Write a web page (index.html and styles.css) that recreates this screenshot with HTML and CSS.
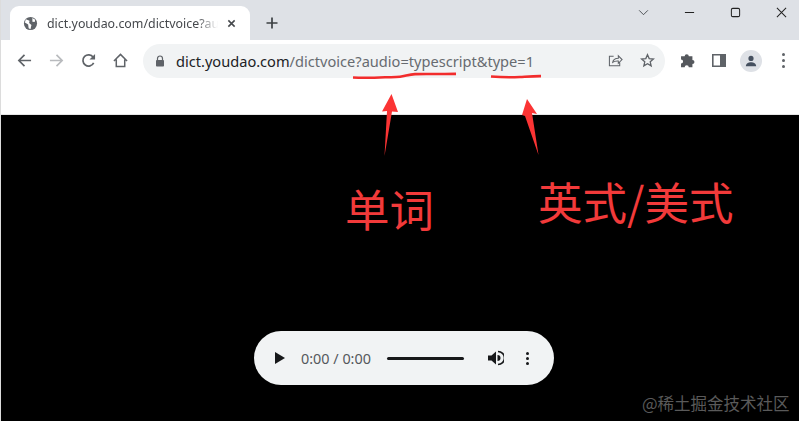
FILE: index.html
```html
<!DOCTYPE html>
<html lang="zh-CN">
  <head>
    <meta charset="UTF-8" />
    <title>dict.youdao.com/dictvoice</title>
    <link rel="stylesheet" href="styles.css">
  </head>
  <body>
    <div class="window">
      <div class="tabstrip">
        <div class="tab">
          <svg class="globe" viewBox="0 0 16 16">
            <circle cx="8" cy="8" r="7" fill="#5f6368" />
            <path d="M3 3.5 7 5l-.5 2.5L9 9.5 8 14l-2-1-.5-4L2 7zM10 2l3 2-.5 2.500L10 6z" fill="#fff" />
          </svg>
          <span class="tab-title">dict.youdao.com/dictvoice?au</span>
          <svg class="tab-close" viewBox="0 0 10 10">
            <path d="M1.5 1.5l7 7M8.5 1.5l-7 7" stroke="#45484c" stroke-width="1.7" fill="none" />
          </svg>
        </div>
        <svg class="new-tab" viewBox="0 0 12 12">
          <path d="M6 .5v11M.5 6h11" stroke="#3c4043" stroke-width="1.7" fill="none" />
        </svg>
        <div class="window-controls">
          <svg class="caret" viewBox="0 0 12 8"><path d="M1 1.5l5 5 5-5" stroke="#3c4043" fill="none" /></svg>
          <svg class="win-btn" viewBox="0 0 12 12"><path d="M1 6h10" stroke="#222" stroke-width="1.1" fill="none" /></svg>
          <svg class="win-btn" viewBox="0 0 12 12"><rect x="1.5" y="1.5" width="9" height="9" rx="1.5" stroke="#222" stroke-width="1.1" fill="none" /></svg>
          <svg class="win-btn" viewBox="0 0 12 12"><path d="M1 1l10 10M11 1L1 11" stroke="#222" stroke-width="1.1" fill="none" /></svg>
        </div>
      </div>

      <div class="toolbar">
        <svg class="tool" viewBox="0 0 16 16"><path d="M15 8H2M8 2 2 8l6 6" stroke="#5f6368" stroke-width="1.8" fill="none" /></svg>
        <svg class="tool" viewBox="0 0 16 16"><path d="M1 8h13M8 2l6 6-6 6" stroke="#b9bbbe" stroke-width="1.8" fill="none" /></svg>
        <svg class="tool" viewBox="0 0 16 16"><path d="M13.5 10.5A6 6 0 1 1 13 4.5" stroke="#5f6368" stroke-width="1.8" fill="none" /><path d="M15 1v6H9z" fill="#5f6368" /></svg>
        <svg class="tool" viewBox="0 0 16 16"><path d="M1 8.5 8 1.500l7 7M3.500 7v7.500h9V7" stroke="#5f6368" stroke-width="1.6" fill="none" /></svg>

        <div class="omnibox">
          <svg class="lock" viewBox="0 0 10 12">
            <path d="M2.5 5V3.5a2.5 2.5 0 0 1 5 0V5" stroke="#5f6368" stroke-width="1.2" fill="none" />
            <rect x="1" y="5" width="8" height="6.5" rx=".8" fill="#5f6368" />
          </svg>
          <span class="url"><span class="host">dict.youdao.com</span>/dictvoice?audio=typescript&amp;type=1</span>
          <svg class="omni-icon" viewBox="0 0 16 16"><path d="M6 3.500H1.500v10h11V10M5 10c.5-3 3-4.500 6-4.500V3l4 4-4 4V8.500C8.500 8.300 6.500 8.800 5 10z" stroke="#5f6368" stroke-width="1.1" fill="none" /></svg>
          <svg class="omni-icon" viewBox="0 0 16 16"><path d="M8 1.800l1.800 4.200 4.500.4-3.400 3 1 4.400L8 11.500l-3.900 2.300 1-4.400-3.400-3 4.500-.4z" stroke="#5f6368" stroke-width="1.400" fill="none" /></svg>
        </div>

        <div class="toolbar-end">
          <svg class="ext" viewBox="0 2 14.500 14"><path d="M1 5h3.500a2 2 0 0 1 4 0H12v3.500a2 2 0 0 1 0 4V15.500H8.500a2 2 0 0 0-4 0H1v-3.500a2 2 0 0 0 0-4z" fill="#55585d" /></svg>
          <svg class="side" viewBox="0 0 14 13"><path d="M.8.800h12.400v11.400H.8z" stroke="#5f6368" stroke-width="1.600" fill="none" /><rect x="8" y="1" width="5" height="11" fill="#5f6368" /></svg>
          <div class="avatar">
            <svg viewBox="0 0 14 14"><circle cx="7" cy="4" r="3" fill="#45505f" /><path d="M1 13c0-3 3-4.500 6-4.500s6 1.500 6 4.500z" fill="#45505f" /></svg>
          </div>
          <div class="kebab"><i></i><i></i><i></i></div>
        </div>
      </div>

      <div class="page-top"></div>

      <div class="viewer">
        <div class="player">
          <svg class="play" viewBox="0 0 10 12"><path d="M0 0l10 6-10 6z" fill="#17181a" /></svg>
          <span class="time">0:00 / 0:00</span>
          <div class="track"></div>
          <svg class="volume" viewBox="0 0 16 16">
            <path d="M0 5.500h3.500L8 1.500v13l-4.500-4H0z" fill="#17181a" />
            <path d="M10 1.500a6.500 6.500 0 0 1 0 13" stroke="#17181a" stroke-width="1.600" fill="none" />
            <path d="M9.500 5a3 3 0 0 1 0 6z" fill="#17181a" />
          </svg>
          <div class="player-menu"><i></i><i></i><i></i></div>
        </div>
      </div>
    </div>

    <svg class="marks" viewBox="0 0 799 421">
      <path d="M353 77.500c12 .6 22 .2 32-.3 6-.1 10 .2 15-.4 5-.5 9-2.500 15-2.700 14-.5 27 .3 41-.2M491 76.500c10 .8 20 .9 29 .5 7-.4 14-1 21-.9" stroke="#f22c2c" stroke-width="2.600" fill="none" />
      <path d="M391.500 94 398 112l-6-.5L384.500 156 387 111l-5 .5zM527 99l10 15-5-1 6.500 42L525 116l-3-1z" fill="#fb3434" />
    </svg>
    <span class="label label-word">单词</span>
    <span class="label label-type">英式/美式</span>
    <span class="watermark">@稀土掘金技术社区</span>
  </body>
</html>
```

FILE: styles.css
```css
* {
  box-sizing: border-box;
}
body {
  margin: 0;
  width: 799px;
  height: 421px;
  overflow: hidden;
  position: relative;
  background: white;
  font-family: "Noto Sans", sans-serif;
}
svg {
  display: block;
  flex: none;
}
.window {
  height: 421px;
  display: flex;
  flex-direction: column;
  border-left: 1px solid #dcdcdc;
}

.tabstrip {
  height: 40px;
  background: #dee1e6;
  display: flex;
  align-items: flex-end;
  padding-left: 9px;
}
.tab {
  width: 240px;
  height: 34px;
  background: white;
  border-radius: 9px 9px 0 0;
  display: flex;
  align-items: center;
  padding: 0 13px;
}
.globe {
  width: 15px;
  height: 15px;
}
.tab-title {
  width: 171px;
  margin-left: 9px;
  font-size: 12.4px;
  color: #45484c;
  white-space: nowrap;
  -webkit-mask-image: linear-gradient(to right, black 150px, transparent 171px);
  mask-image: linear-gradient(to right, black 150px, transparent 171px);
}
.tab-close {
  width: 9px;
  height: 9px;
  margin-left: 9px;
}
.new-tab {
  width: 12px;
  height: 12px;
  margin: 0 0 11px 16px;
}
.window-controls {
  margin-left: auto;
  align-self: flex-start;
  display: flex;
  align-items: center;
  gap: 35px;
  padding: 7px 12px 0 0;
}
.caret {
  width: 11px;
  height: 7px;
}
.win-btn {
  width: 11px;
  height: 11px;
}

.toolbar {
  height: 41px;
  display: flex;
  align-items: center;
  padding-left: 16px;
  flex: none;
}
.tool {
  width: 15px;
  height: 15px;
  margin-right: 17px;
}
.omnibox {
  width: 522px;
  height: 34px;
  margin-left: -2px;
  border-radius: 17px;
  background: #f1f3f4;
  display: flex;
  align-items: center;
  padding-left: 12px;
}
.lock {
  width: 10px;
  height: 12px;
}
.url {
  margin-left: 11px;
  font-size: 14.6px;
  color: #676b70;
  white-space: nowrap;
}
.host {
  color: #202124;
}
.omni-icon {
  width: 15px;
  height: 15px;
}
.url + .omni-icon {
  margin-left: auto;
  margin-right: 17px;
}
.omni-icon + .omni-icon {
  margin-right: 10px;
}
.toolbar-end {
  display: flex;
  align-items: center;
  padding-left: 15px;
}
.ext {
  width: 15px;
  height: 15px;
}
.side {
  width: 14px;
  height: 13px;
  margin-left: 17px;
}
.avatar {
  width: 22px;
  height: 22px;
  margin-left: 14px;
  border-radius: 50%;
  background: #dee1e6;
  display: flex;
  align-items: center;
  justify-content: center;
}
.avatar svg {
  width: 12px;
  height: 12px;
}
.kebab,
.player-menu {
  display: flex;
  flex-direction: column;
}
.kebab {
  gap: 3px;
  margin-left: 20px;
}
.kebab i {
  width: 3px;
  height: 3px;
  border-radius: 50%;
  background: #5f6368;
}

.page-top {
  height: 34px;
  flex: none;
  border-bottom: 1px solid #e6e6e6;
}
.viewer {
  flex: 1;
  background: black;
  display: flex;
  justify-content: center;
  align-items: flex-end;
  padding: 0 0 36px 8px;
}
.player {
  width: 300px;
  height: 54px;
  border-radius: 27px;
  background: #f1f3f4;
  display: flex;
  align-items: center;
  padding-left: 21px;
}
.play {
  width: 10px;
  height: 12px;
}
.time {
  margin-left: 16px;
  font-size: 14.4px;
  color: #55585c;
  white-space: nowrap;
}
.track {
  width: 77px;
  height: 3px;
  margin-left: 16px;
  border-radius: 2px;
  background: #17181a;
}
.volume {
  width: 16px;
  height: 16px;
  margin-left: 24px;
}
.player-menu {
  gap: 2px;
  margin-left: 22px;
}
.player-menu i {
  width: 3px;
  height: 3px;
  border-radius: 50%;
  background: #17181a;
}

.marks {
  position: absolute;
  left: 0;
  top: 0;
  width: 799px;
  height: 421px;
}
.label {
  position: absolute;
  font-family: "Noto Sans CJK SC", sans-serif;
  font-size: 44.5px;
  line-height: 50px;
  color: #f23a3a;
  white-space: nowrap;
}
.label-word {
  left: 345px;
  top: 183px;
}
.label-type {
  left: 538px;
  top: 176px;
}
.watermark {
  position: absolute;
  left: 642px;
  top: 393px;
  font-family: "Noto Sans CJK SC", sans-serif;
  font-size: 16.5px;
  line-height: 20px;
  color: #5a5a5a;
  white-space: nowrap;
}
```
